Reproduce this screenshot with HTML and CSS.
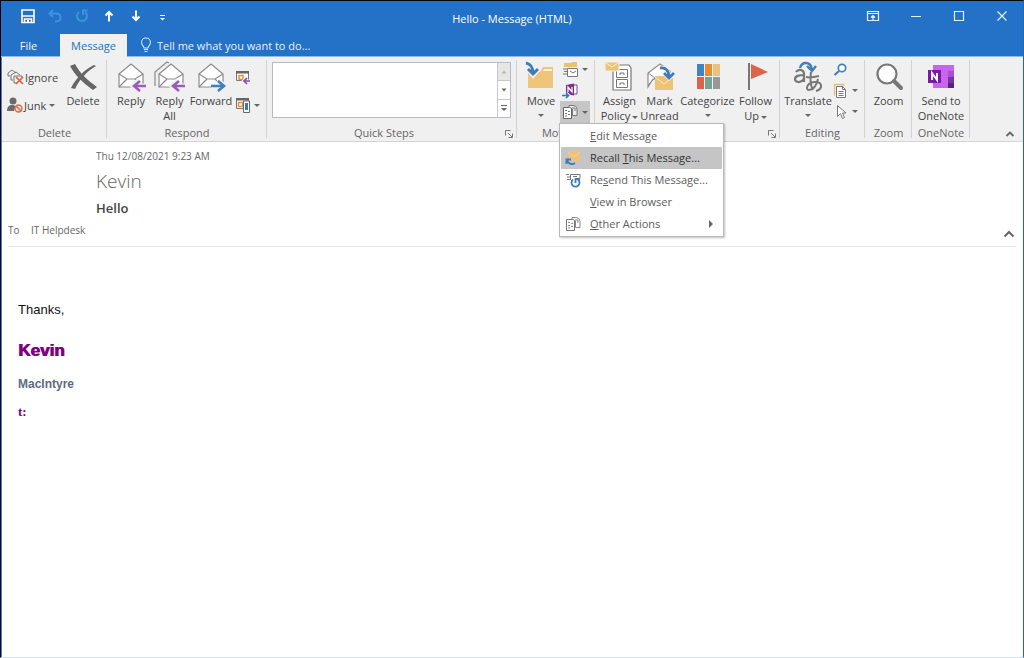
FILE: index.html
```html
<!DOCTYPE html>
<html lang="en">
<head>
<meta charset="utf-8">
<title>Hello - Message (HTML)</title>
<link rel="stylesheet" href="styles.css">
</head>
<body>
<div class="window">
  <header class="titlebar">
    <div class="quick-access">
      <button class="bar-btn" aria-label="Save"><svg width="16" height="16" viewBox="0 0 16 16"><path d="M2 2h12v12.500H2z" fill="none" stroke="#fff" stroke-width="1.600"/><path d="M2 8h12M4.500 14.500V11h7v3.500" fill="none" stroke="#fff" stroke-width="1.500"/><path d="M7 12h2v3H7z" fill="#fff"/></svg></button>
      <button class="bar-btn" aria-label="Undo"><svg width="16" height="16" viewBox="0 0 16 16"><path d="M6 2 2.500 5.500 6 9M3 5.500h6.500a4 4 0 0 1 0 8H8" fill="none" stroke="#3d94dc" stroke-width="2"/></svg></button>
      <button class="bar-btn" aria-label="Redo"><svg width="16" height="16" viewBox="0 0 16 16"><path d="M5 4A5 5 0 1 0 11 4M9 7V2.500h4.500" fill="none" stroke="#3d94dc" stroke-width="2"/></svg></button>
      <button class="bar-btn" aria-label="Previous item"><svg width="16" height="16" viewBox="0 0 16 16"><path d="M8 13.500V4M4.500 7.500 8 4l3.500 3.500" fill="none" stroke="#fff" stroke-width="2"/></svg></button>
      <button class="bar-btn" aria-label="Next item"><svg width="16" height="16" viewBox="0 0 16 16"><path d="M8 2.500V12M4.500 8.500 8 12l3.500-3.500" fill="none" stroke="#fff" stroke-width="2"/></svg></button>
      <button class="bar-btn" aria-label="Customize toolbar"><svg width="16" height="16" viewBox="0 0 16 16"><path d="M5 7.500h5" stroke="#fff"/><path d="M5 10h5l-2.500 2.500z" fill="#fff"/></svg></button>
    </div>
    <h1 class="caption">Hello - Message (HTML)</h1>
    <div class="window-controls">
      <button class="ctl-btn" aria-label="Ribbon display options"><svg width="14" height="12" viewBox="0 0 14 12"><path d="M1.500 1.500h11v9h-11zM1.500 3.500h11M7 10V5.500M5 7.500l2-2 2 2" fill="none" stroke="#e4f1fc" stroke-width="1.200"/></svg></button>
      <button class="ctl-btn" aria-label="Minimize"><svg width="12" height="12" viewBox="0 0 12 12"><path d="M1 6.500h10" stroke="#e4f1fc"/></svg></button>
      <button class="ctl-btn" aria-label="Maximize"><svg width="12" height="12" viewBox="0 0 12 12"><path d="M1.500 1.500h9v9h-9z" fill="none" stroke="#e4f1fc" stroke-width="1.200"/></svg></button>
      <button class="ctl-btn" aria-label="Close"><svg width="12" height="12" viewBox="0 0 12 12"><path d="m1.500 1.500 9 9m0-9-9 9" stroke="#e4f1fc" stroke-width="1.200"/></svg></button>
    </div>
  </header>

  <nav class="tabs">
    <button class="tab tab-file">File</button>
    <button class="tab tab-active">Message</button>
    <label class="tell-me">
      <svg width="12" height="16" viewBox="0 0 12 16"><path d="M4 11C4 9 1.500 8 1.500 5.500a4.200 4.200 0 0 1 9 0C10.500 8 8 9 8 11zM4 12.500h4M4.500 14.500h3" fill="none" stroke="#d6e8f8" stroke-width="1.100"/></svg>
      <input class="tell-input" type="text" placeholder="Tell me what you want to do..." aria-label="Tell me what you want to do">
    </label>
  </nav>

  <div class="ribbon">
    <section class="group group-delete">
      <div class="tools">
        <div class="stack stack-two">
          <button class="small"><svg width="17" height="16" viewBox="0 0 17 16"><path d="M1 7V4l4-3 4 3M1 7h2M4 11V6l5-3 4 3M4 11h2M7 14V7h8v2M7 14h3" fill="none" stroke="#777"/><path d="m9 8 7 7m0-7-7 7" stroke="#e2613c" stroke-width="1.700"/></svg>Ignore</button>
          <button class="small"><svg width="16" height="16" viewBox="0 0 16 16"><circle cx="6" cy="4" r="3.500" fill="#6b6b6b"/><path d="M0 14c0-4 2-6 5-6 2 0 3 .5 3.500 1.500L7 14z" fill="#6b6b6b"/><circle cx="11.500" cy="11.500" r="3.500" fill="#f5ded8" stroke="#df6849" stroke-width="1.400"/><path d="m9 9 5 5" stroke="#df6849" stroke-width="1.400"/></svg>Junk<i class="caret"></i></button>
        </div>
        <button class="large w-38"><svg width="32" height="32" viewBox="0 0 32 32"><path d="m3 5 5-2c5 9 12 16 22 23l-4 3C15 21 8 14 3 5zM29 5C19 11 12 19 8 28l-4-1C9 17 17 9 27 4z" fill="#666"/></svg><span>Delete</span></button>
      </div>
      <h2 class="group-name">Delete</h2>
    </section>

    <section class="group group-respond">
      <div class="tools">
        <button class="large w-38"><svg width="32" height="32" viewBox="0 0 32 32"><path d="m4 13 12-10 12 10v13H4z" fill="#fff" stroke="#8b8b8b" stroke-width="1.200"/><path d="m4 13 8 5h8l8-5M4 26l8-8m8 0 3 3" fill="none" stroke="#8b8b8b" stroke-width="1.200"/><path d="M30 25H18m6-6-6 6 6 6" fill="none" stroke="#f0f0f0" stroke-width="5"/><path d="M31 25H19m6-5-6 5 6 5" fill="none" stroke="#975fba" stroke-width="2.600"/></svg><span>Reply</span></button>
        <button class="large w-39"><svg width="32" height="32" viewBox="0 0 32 32"><path d="M1 25V11L13 1l2 1" fill="none" stroke="#8b8b8b" stroke-width="1.200"/><path d="m5 13 12-10 12 10v13H5z" fill="#fff" stroke="#8b8b8b" stroke-width="1.200"/><path d="m5 13 8 5h8l8-5M5 26l8-8m8 0 3 3" fill="none" stroke="#8b8b8b" stroke-width="1.200"/><path d="M30 25H18m6-6-6 6 6 6" fill="none" stroke="#f0f0f0" stroke-width="5"/><path d="M31 25H19m6-5-6 5 6 5" fill="none" stroke="#975fba" stroke-width="2.600"/></svg><span>Reply<br>All</span></button>
        <button class="large w-44"><svg width="32" height="32" viewBox="0 0 32 32"><path d="m4 13 12-10 12 10v13H4z" fill="#fff" stroke="#8b8b8b" stroke-width="1.200"/><path d="m4 13 8 5h8l8-5M4 26l8-8m8 0 3 3" fill="none" stroke="#8b8b8b" stroke-width="1.200"/><path d="M16 25h12m-5-6 6 6-6 6" fill="none" stroke="#f0f0f0" stroke-width="5"/><path d="M16 25h13m-6-5 6 5-6 5" fill="none" stroke="#437fb8" stroke-width="2.600"/></svg><span>Forward</span></button>
        <div class="stack stack-two">
          <button class="small" aria-label="Meeting"><svg width="16" height="16" viewBox="0 0 16 16"><path d="M1.500 2.500h12v9h-12z" fill="#fff" stroke="#777"/><path d="M1 2h13v2.500H1z" fill="#666"/><path d="M4 6.500h4v4H4z" fill="none" stroke="#ed8b3b" stroke-width="1.500"/><path d="M15 12H8.500m3-3-3 3 3 3" fill="none" stroke="#f0f0f0" stroke-width="3"/><path d="M15 12H9m3-3-3 3 3 3" fill="none" stroke="#8a4fb0" stroke-width="1.700"/></svg></button>
          <button class="small" aria-label="More respond actions"><svg width="16" height="16" viewBox="0 0 16 16"><path d="M1.500 1.500h12v10h-12z" fill="#fff" stroke="#777"/><path d="M1 1h13v2.500H1z" fill="#666"/><path d="M3.500 5.500h4v4h-4z" fill="none" stroke="#ed8b3b" stroke-width="1.500"/><path d="M8.500 4h6v11.500h-6z" fill="#fff" stroke="#666"/><path d="M10 6h3v7h-3z" fill="#3279be"/></svg><i class="caret"></i></button>
        </div>
      </div>
      <h2 class="group-name">Respond</h2>
    </section>

    <section class="group group-steps">
      <div class="tools gallery">
        <div class="gallery-list"></div>
        <div class="gallery-scroll">
          <button class="scroll-btn scroll-off" aria-label="Scroll up"><svg width="8" height="8" viewBox="0 0 8 8"><path d="m1.500 5.500 2.500-3 2.500 3z" fill="#b5b5b5"/></svg></button>
          <button class="scroll-btn" aria-label="Scroll down"><svg width="8" height="8" viewBox="0 0 8 8"><path d="m1.500 2.500 2.500 3 2.500-3z" fill="#666"/></svg></button>
          <button class="scroll-btn" aria-label="More quick steps"><svg width="8" height="8" viewBox="0 0 8 8"><path d="M1 1.500h6" stroke="#666"/><path d="m1 4 3 3 3-3z" fill="#666"/></svg></button>
        </div>
      </div>
      <h2 class="group-name">Quick Steps</h2>
      <button class="launcher" aria-label="Manage quick steps"><svg width="8" height="8" viewBox="0 0 8 8"><path d="M.5 5.500v-5h5M3 3l4 4M7.500 3.500v4h-4" fill="none" stroke="#777"/></svg></button>
    </section>

    <section class="group group-move">
      <div class="tools">
        <button class="large w-38"><svg width="32" height="32" viewBox="0 0 32 32"><path d="M3 11h12l3-5h10v21H3z" fill="#efc679"/><path d="M19 8h8v2h-9z" fill="#fff3d9"/><path d="M2 1c5 1 7 4 6 12M3 8l5 6 5-6" fill="none" stroke="#f0f0f0" stroke-width="5"/><path d="M1 2c5 1 7 4 7 11M3 8l5 5 5-5" fill="none" stroke="#3e7cb6" stroke-width="3"/></svg><span>Move</span><i class="caret"></i></button>
        <div class="stack stack-three">
          <button class="small" aria-label="Rules"><svg width="17" height="16" viewBox="0 0 17 16"><path d="M2 1h7l1-1h5v5H2z" fill="#eebf70"/><path d="M5.500 6.500h10v8h-10z" fill="#fff" stroke="#777"/><path d="m8 9 3 2 3-2M1 7h4M2 9.500h3M1 12h4" fill="none" stroke="#777"/></svg><i class="caret"></i></button>
          <button class="small" aria-label="OneNote"><svg width="17" height="16" viewBox="0 0 17 16"><path d="M8 2h7v9H8z" fill="#fff" stroke="#7d4298"/><path d="m4 2 8-1.500v12L4 11z" fill="#7b2d91"/><path d="M6 9V4l4 5V4" fill="none" stroke="#fff" stroke-width="1.300"/><path d="M1 12.500h5M4.500 10 7 12.500 4.500 15" fill="none" stroke="#f0f0f0" stroke-width="3"/><path d="M0 12.500h6M4 10l2.500 2.500L4 15" fill="none" stroke="#3279be" stroke-width="1.700"/></svg></button>
          <div class="menu-anchor">
            <button class="small small-open" aria-label="Actions" aria-expanded="true"><svg width="17" height="16" viewBox="0 0 17 16"><path d="M1.500 3.500h8v11h-8z" fill="#fff" stroke="#666"/><path d="M3 6.500h2M3 9.500h2M3 12h2M6 7.500h2M6 10.500h2" stroke="#777"/><path d="M7 3V1.500h4a4 4 0 0 1 4 3.500v6.500h-4.500V5L8 3.500" fill="#eee" stroke="#777"/><path d="M10 4h3v3" fill="none" stroke="#777"/></svg><i class="caret"></i></button>
            <div class="menu" role="menu">
              <button class="menu-item" role="menuitem"><span class="menu-icon"></span><span class="menu-text"><u>E</u>dit Message</span></button>
              <button class="menu-item menu-item-hot" role="menuitem"><span class="menu-icon"><svg width="16" height="16" viewBox="0 0 16 16"><path d="M3 1h12v10H3z" fill="#efc27a"/><path d="m3 2 6 5 6-5" fill="none" stroke="#f3d296"/><path d="M2 13.500V9h4.500M2.500 10c1 4 5 5 8 2.500" fill="none" stroke="#c5c5c5" stroke-width="4"/><path d="M1.500 14V9.500H6M2 10c1 4 5 5 8 3" fill="none" stroke="#3b7eb9" stroke-width="2"/></svg></span><span class="menu-text">Recall <u>T</u>his Message...</span></button>
              <button class="menu-item" role="menuitem"><span class="menu-icon"><svg width="16" height="16" viewBox="0 0 16 16"><path d="M5.500 8V2.500h9.500V6M1 2.500h3M2 5h3M2 7.500h3M8 4.500h4" fill="none" stroke="#777"/><path d="M8 7.500a4 4 0 1 0 5 0M10.500 11V7H15" fill="none" stroke="#3b7eb9" stroke-width="1.800"/></svg></span><span class="menu-text">Re<u>s</u>end This Message...</span></button>
              <button class="menu-item" role="menuitem"><span class="menu-icon"></span><span class="menu-text"><u>V</u>iew in Browser</span></button>
              <button class="menu-item" role="menuitem"><span class="menu-icon"><svg width="16" height="16" viewBox="0 0 16 16"><path d="M1.500 3.500h8v11h-8z" fill="#fff" stroke="#777"/><path d="M3 6.500h2M3 9.500h2M3 12h2M6 7.500h2M6 10.500h2" stroke="#888"/><path d="M7 3V1.500h4a4 4 0 0 1 4 3.500v6.500h-4.500V5L8 3.500" fill="#fff" stroke="#888"/><path d="M10 4h3v3" fill="none" stroke="#888"/></svg></span><span class="menu-text"><u>O</u>ther Actions</span><svg class="submenu" width="6" height="8" viewBox="0 0 6 8"><path d="m1 0 4 4-4 4z" fill="#666"/></svg></button>
            </div>
          </div>
        </div>
      </div>
      <h2 class="group-name">Move</h2>
    </section>

    <section class="group group-tags">
      <div class="tools">
        <button class="large w-38"><svg width="32" height="32" viewBox="0 0 32 32"><path d="M9 8V4h16l2 3v22H9z" fill="#fff" stroke="#777" stroke-width="1.200"/><path d="M12.500 8.500h11v8h-11zM12.500 18.500h11v8h-11z" fill="#fff" stroke="#777"/><path d="M16 14v-2h4v2M16 24v-2h4v2" fill="none" stroke="#777"/><path d="M1 1h14v9H1z" fill="#efc376" stroke="#f0f0f0"/><path d="m2 2 6 4 6-4" fill="none" stroke="#fff3d5"/></svg><span>Assign<br>Policy<i class="caret"></i></span></button>
        <button class="large w-42"><svg width="32" height="32" viewBox="0 0 32 32"><path d="M4 26V12L16 3l10 7v8H9z" fill="#fff" stroke="#8b8b8b" stroke-width="1.200"/><path d="m4 12 7 5M4 24l8-8" fill="none" stroke="#8b8b8b"/><path d="M11 15h18v14H11z" fill="#efc376"/><path d="m11 16 9 7 9-7" fill="none" stroke="#faebcb"/><path d="M16 7c6-1 9 3 9 9M20 12l5 5 5-5" fill="none" stroke="#fff" stroke-width="4"/><path d="M16 7c6-1 9 3 9 9M20 12l5 5 5-5" fill="none" stroke="#3e7cb6" stroke-width="2.800"/></svg><span>Mark<br>Unread</span></button>
        <button class="large w-54"><svg width="32" height="32" viewBox="0 0 32 32"><path d="M5 3h7v12H5z" fill="#4284c0"/><path d="M13 3h7v12h-7z" fill="#e78c35"/><path d="M21 3h7v12h-7z" fill="#ecc17c"/><path d="M5 16h7v12H5z" fill="#d9644b"/><path d="M13 16h7v12h-7z" fill="#75a394"/><path d="M21 16h7v12h-7z" fill="#989898"/></svg><span>Categorize</span><i class="caret"></i></button>
        <button class="large w-42"><svg width="32" height="32" viewBox="0 0 32 32"><path d="M9 2v27" stroke="#777" stroke-width="2"/><path d="m11 3 17 8-17 7z" fill="#dc6447"/></svg><span>Follow<br>Up<i class="caret"></i></span></button>
      </div>
      <h2 class="group-name">Tags</h2>
      <button class="launcher" aria-label="Tag options"><svg width="8" height="8" viewBox="0 0 8 8"><path d="M.5 5.500v-5h5M3 3l4 4M7.500 3.500v4h-4" fill="none" stroke="#777"/></svg></button>
    </section>

    <section class="group group-editing">
      <div class="tools">
        <button class="large w-46"><svg width="32" height="32" viewBox="0 0 32 32"><path d="M4 11c2-3 8-3 8 2v8M12 14c-5 0-9 1-9 4s5 5 9 0" fill="none" stroke="#777" stroke-width="2.200"/><path d="M14 16c4 1 9 0 13-1M19 11c-1 7-1 13 2 18M26 18c-2 8-6 11-9 11-4 0-2-8 6-8s8 7 1 9" fill="none" stroke="#777" stroke-width="2"/><path d="M8 7c2-7 11-7 12 2M15 5l5 5 4-5" fill="none" stroke="#437fb8" stroke-width="2.400"/></svg><span>Translate</span><i class="caret"></i></button>
        <div class="stack stack-three">
          <button class="small" aria-label="Find"><svg width="16" height="16" viewBox="0 0 16 16"><circle cx="9" cy="6" r="3.700" fill="#fff" stroke="#437fb8" stroke-width="1.700"/><path d="m6 9-4.500 4" stroke="#437fb8" stroke-width="2.200"/></svg></button>
          <button class="small" aria-label="Related"><svg width="16" height="16" viewBox="0 0 16 16"><path d="M1.500 12.500v-11h9v2" fill="none" stroke="#e7bd79" stroke-width="1.300"/><path d="M3.500 3.500h6l3 3v8h-9z" fill="#fff" stroke="#777"/><path d="M9.500 3.500v3h3M5.500 8.500h5M5.500 10.500h5M5.500 12.500h5" fill="none" stroke="#777"/></svg><i class="caret"></i></button>
          <button class="small" aria-label="Select"><svg width="16" height="16" viewBox="0 0 16 16"><path d="M4.500 1.500v11l3-3 2 5 2-1-2-4.500h3.500z" fill="#fff" stroke="#777"/></svg><i class="caret"></i></button>
        </div>
      </div>
      <h2 class="group-name">Editing</h2>
    </section>

    <section class="group group-zoom">
      <div class="tools">
        <button class="large w-46"><svg width="32" height="32" viewBox="0 0 32 32"><circle cx="14" cy="13" r="9.500" fill="#fff" stroke="#777" stroke-width="2.200"/><path d="m21 20 7 7" stroke="#777" stroke-width="4" stroke-linecap="round"/></svg><span>Zoom</span></button>
      </div>
      <h2 class="group-name">Zoom</h2>
    </section>

    <section class="group group-onenote">
      <div class="tools">
        <button class="large w-54"><svg width="32" height="32" viewBox="0 0 32 32"><path d="M8 4h21v23H8z" fill="#c965eb"/><path d="M23 10h6v6h-6z" fill="#aa4ed2"/><path d="M23 16h6v6h-6z" fill="#7933a8"/><path d="M23 22h6v5h-6z" fill="#59228b"/><path d="M3 9h13v13H3z" fill="#7719aa"/><path d="M7 19v-7l5 7v-7" fill="none" stroke="#fff" stroke-width="2"/></svg><span>Send to<br>OneNote</span></button>
      </div>
      <h2 class="group-name">OneNote</h2>
    </section>

    <div class="ribbon-end">
      <button class="collapse" aria-label="Collapse the ribbon"><svg width="10" height="8" viewBox="0 0 10 8"><path d="m1.500 6 3.500-3.500L8.500 6" fill="none" stroke="#666" stroke-width="1.800"/></svg></button>
    </div>
  </div>

  <section class="envelope">
    <div class="summary">
      <time class="date">Thu 12/08/2021 9:23 AM</time>
      <div class="sender">Kevin</div>
      <h2 class="subject">Hello</h2>
    </div>
    <div class="recipients">
      <span class="to">To</span>
      <span>IT Helpdesk</span>
      <button class="collapse collapse-header" aria-label="Collapse header"><svg width="12" height="8" viewBox="0 0 12 8"><path d="m1.500 6.500 4.500-4.500 4.500 4.500" fill="none" stroke="#666" stroke-width="2"/></svg></button>
    </div>
  </section>

  <main class="message">
    <p class="closing">Thanks,</p>
    <p class="sign-name">Kevin</p>
    <p class="sign-surname">MacIntyre</p>
    <p class="sign-phone">t:</p>
  </main>
</div>
</body>
</html>
```
FILE: styles.css
```css
* { box-sizing: border-box; }
body { margin: 0; background: #000; color: #444; font: 11px/15px "Open Sans", "Noto Sans", sans-serif; }
h1, h2, p { margin: 0; font: inherit; }
button { margin: 0; padding: 0; border: 0; background: none; color: inherit; font: inherit; }
svg { display: block; flex: none; }

.window { display: flex; flex-direction: column; min-height: 100vh; background: #fff; border-top: 1px solid #080808; border-left: 1px solid #000; border-right: 1px solid #1d68b3; border-bottom: 1px solid #cfe2f4; box-shadow: inset 1px 0 #3b88d0; }

.titlebar { display: grid; grid-template-columns: 1fr auto 1fr; height: 33px; background: #2472c8; color: #fff; }
.quick-access { display: flex; align-items: center; gap: 11px; padding-left: 19px; height: 30px; }
.bar-btn { width: 16px; height: 16px; }
.caption { padding-top: 10px; }
.window-controls { display: flex; justify-content: flex-end; height: 30px; }
.ctl-btn { display: flex; width: 43px; align-items: center; justify-content: center; }

.tabs { display: flex; height: 23px; background: #2472c8; border-bottom: 1px solid #8fbbe8; color: #f4f9ff; }
.tab { width: 67px; }
.tab-file { width: 59px; padding-right: 4px; }
.tab-active { margin-bottom: -1px; background: #f0f0f0; color: #2472b8; font-weight: 500; }
.tell-me { display: flex; flex: 1; align-items: center; gap: 5px; padding-left: 13px; }
.tell-input { flex: 1; padding: 0; border: 0; outline: 0; background: none; color: #fff; font: inherit; }
.tell-input::placeholder { color: #e4f0fb; opacity: 1; }

.ribbon { display: flex; height: 85px; margin-left: 1px; padding-top: 1px; background: #f0f0f0; border-bottom: 1px solid #d4d4d4; }
.group { position: relative; display: flex; flex-direction: column; flex: none; }
.group::after { content: ""; position: absolute; top: 2px; right: 0; bottom: 3px; border-right: 1px solid #d2d2d2; }
.group-delete { width: 105px; }
.group-respond { width: 160px; }
.group-steps { flex: 1; min-width: 120px; }
.group-move { width: 78px; }
.group-tags { width: 185px; }
.group-editing { width: 85px; }
.group-zoom { width: 47px; }
.group-onenote { width: 58px; }
.tools { display: flex; justify-content: center; height: 69px; }
.group-name { text-align: center; color: #666; line-height: 16px; }
.group-steps .group-name { padding-right: 16px; }
.group-tags .tools { padding-left: 2px; }
.group-delete .tools { justify-content: flex-start; padding-left: 5px; }

.large { display: flex; flex-direction: column; align-items: center; padding-top: 3px; white-space: nowrap; }
.large > .caret { margin: 6px 0 0; }
.w-38 { width: 38px; }
.w-39 { width: 39px; }
.w-42 { width: 42px; }
.w-44 { width: 44px; }
.w-46 { width: 46px; }
.w-54 { width: 54px; }
.caret { display: inline-block; flex: none; margin-left: 2px; border: solid transparent; border-width: 3px 3px 0; border-top-color: #666; vertical-align: middle; }

.stack { display: flex; flex-direction: column; }
.stack-two { gap: 6px; padding-top: 8px; }
.stack-three { padding-top: 1px; }
.small { display: flex; align-items: center; height: 22px; gap: 1px; padding: 0 2px; white-space: nowrap; }
.stack-three .small { height: 21px; }
.group-delete .stack { width: 57px; }
.group-delete .small { padding: 0; }
.menu-anchor { position: relative; }
.menu-anchor .small-open { width: 30px; height: 22px; background: #c6c6c6; }

.gallery { margin: 4px 6px 0 5px; height: 58px; border: 1px solid #b8bcc0; background: #fff; }
.gallery + .group-name { margin-top: 7px; }
.gallery-list { flex: 1; }
.gallery-scroll { display: flex; flex-direction: column; width: 13px; border-left: 1px solid #c4c8cc; }
.scroll-btn { display: flex; flex: 1; align-items: center; justify-content: center; }
.scroll-btn + .scroll-btn { border-top: 1px solid #c4c8cc; }
.scroll-off { background: #e6e6e6; }
.launcher { position: absolute; right: 4px; bottom: 3px; }

.menu { position: absolute; z-index: 2; top: 22px; left: -1px; width: 165px; padding: 1px; background: #fff; border: 1px solid #b9b9b9; box-shadow: 1px 1px 2px rgba(0, 0, 0, 0.25); color: #5c5c5c; }
.menu-item { display: flex; align-items: center; width: 100%; height: 22px; text-align: left; white-space: nowrap; }
.menu-item-hot { background: #c5c5c5; color: #333; }
.menu-icon { width: 25px; margin-left: 4px; }
.menu-text { padding-bottom: 2px; }
.submenu { margin-left: auto; margin-right: 8px; }

.ribbon-end { display: flex; width: 53px; align-items: flex-end; justify-content: flex-end; padding: 0 8px 3px 0; }

.envelope { display: flex; flex-direction: column; margin: 0 7px; padding-top: 7px; border-bottom: 1px solid #e8e8e8; color: #666; }
.summary { padding-left: 88px; }
.date { display: block; font-size: 10px; }
.sender { font-size: 19px; font-weight: 300; line-height: 24px; margin-top: 5px; }
.subject { font-size: 13px; font-weight: 600; line-height: 18px; margin-top: 6px; color: #444; }
.recipients { display: flex; gap: 12px; padding: 6px 0 8px; font-size: 10px; }
.to { width: 11px; }
.collapse-header { align-self: flex-end; margin-left: auto; margin-right: 1px; }

.message { flex: 1; padding: 55px 17px; font-family: "Liberation Sans", Arial, sans-serif; }
.closing { font-size: 13px; line-height: 16px; color: #111; }
.sign-name { margin-top: 22px; font-size: 17px; font-weight: 700; line-height: 22px; color: #800080; text-shadow: 1px 0 #800080; }
.sign-surname { margin-top: 14px; font-size: 12px; font-weight: 700; line-height: 16px; color: #5b6b82; }
.sign-phone { margin-top: 12px; font-family: "Liberation Serif", serif; font-size: 13px; font-weight: 700; line-height: 16px; color: #800080; }
```
